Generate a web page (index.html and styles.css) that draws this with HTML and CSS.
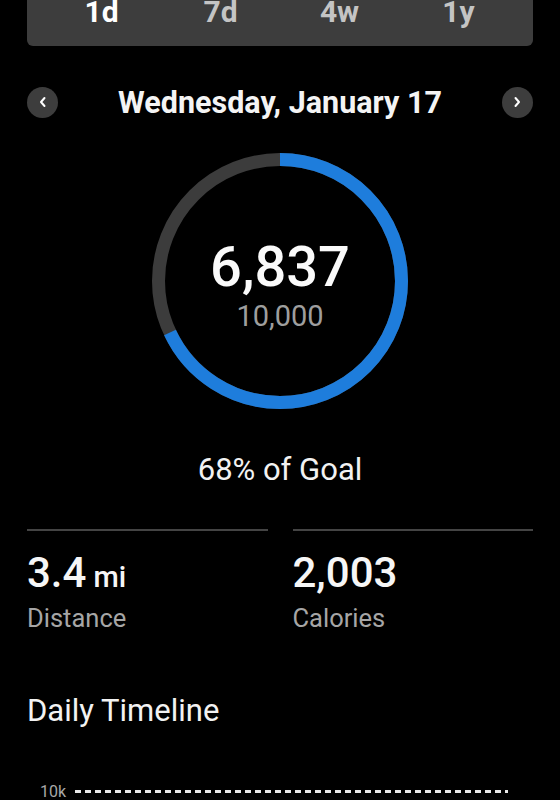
FILE: index.html
```html
<!DOCTYPE html>
<html lang="en">
<head>
<meta charset="UTF-8" />
<meta name="viewport" content="width=device-width, initial-scale=1" />
<title>Steps</title>
<link rel="stylesheet" href="styles.css">
</head>
<body>
<div class="page">
  <div class="tabs">
    <div class="tab active">1d</div>
    <div class="tab">7d</div>
    <div class="tab">4w</div>
    <div class="tab">1y</div>
  </div>

  <div class="date-row">
    <button class="nav-btn" aria-label="Previous day">
      <svg width="14" height="14" viewBox="0 0 14 14"><polyline points="8.5,3 5,7 8.5,11" /></svg>
    </button>
    <h2 class="date-title">Wednesday, January 17</h2>
    <button class="nav-btn" aria-label="Next day">
      <svg width="14" height="14" viewBox="0 0 14 14"><polyline points="5.5,3 9,7 5.5,11" /></svg>
    </button>
  </div>

  <div class="ring">
    <svg class="ring-svg" width="260" height="260" viewBox="0 0 260 260">
      <circle class="ring-track" cx="130" cy="130" r="121.5" />
      <!-- 68% of the circumference (2 * pi * 121.5 = 763.4) -->
      <circle class="ring-fill" cx="130" cy="130" r="121.5"
              stroke-dasharray="519.1 763.4" transform="rotate(-90 130 130)" />
    </svg>
    <div class="ring-text">
      <div class="steps">6,837</div>
      <div class="goal">10,000</div>
    </div>
  </div>

  <p class="goal-pct">68% of Goal</p>

  <div class="stats">
    <div class="stat">
      <div class="stat-value">3.4<span class="unit">mi</span></div>
      <div class="stat-label">Distance</div>
    </div>
    <div class="stat">
      <div class="stat-value">2,003</div>
      <div class="stat-label">Calories</div>
    </div>
  </div>

  <h3 class="section-title">Daily Timeline</h3>

  <div class="chart">
    <div class="chart-row">
      <span class="axis-label">10k</span>
      <span class="goal-line"></span>
    </div>
  </div>
</div>
</body>
</html>
```

FILE: styles.css
```css
body {
  margin: 0;
  background: #000;
  color: #f2f2f2;
  font-family: Roboto, "Noto Sans", Arial, sans-serif;
}
.page {
  padding: 0 27px;
}

/* --- Range tabs --- */
.tabs {
  display: grid;
  grid-template-columns: repeat(4, 1fr);
  margin-top: -24px;
  height: 70px;
  padding: 0 15px;
  box-sizing: border-box;
  background: #3d3d3d;
  border-radius: 6px;
}
.tab {
  text-align: center;
  font-size: 30px;
  font-weight: 700;
  line-height: 30px;
  padding-top: 21px;
  color: #c4c4c4;
}
.tab.active {
  color: #fff;
}

/* --- Date navigation --- */
.date-row {
  display: flex;
  align-items: center;
  justify-content: space-between;
  margin-top: 41px;
  height: 30px;
}
.nav-btn {
  width: 31px;
  height: 31px;
  border-radius: 50%;
  border: none;
  padding: 0;
  background: #3d3d3d;
  display: flex;
  align-items: center;
  justify-content: center;
}
.nav-btn polyline {
  fill: none;
  stroke: #fff;
  stroke-width: 2;
  stroke-linecap: round;
  stroke-linejoin: round;
}
.date-title {
  margin: 0;
  font-size: 30.5px;
  font-weight: 700;
  color: #f4f4f4;
}

/* --- Progress ring --- */
.ring {
  display: grid;
  justify-content: center;
  align-items: center;
  margin-top: 34px;
}
.ring-svg,
.ring-text {
  grid-area: 1 / 1;
}
.ring-svg circle {
  fill: none;
  stroke-width: 13;
}
.ring-track {
  stroke: #3c3c3c;
}
.ring-fill {
  stroke: #1e7ddc;
}
.ring-text {
  text-align: center;
  padding-top: 6px;
}
.steps {
  font-size: 56px;
  font-weight: 500;
  line-height: 60px;
  color: #fafafa;
}
.goal {
  font-size: 29px;
  line-height: 32px;
  margin-top: 3px;
  color: #9e9e9e;
}

.goal-pct {
  margin: 40px 0 0;
  text-align: center;
  font-size: 31px;
  color: #f2f2f2;
}

/* --- Stats --- */
.stats {
  display: grid;
  grid-template-columns: 1fr 1fr;
  gap: 25px;
  margin-top: 41px;
}
.stat {
  border-top: 2px solid #444;
  padding-top: 18px;
}
.stat-value {
  font-size: 42px;
  font-weight: 500;
  line-height: 48px;
  color: #f6f6f6;
}
.unit {
  font-size: 29px;
  line-height: 1;
  margin-left: 7px;
}
.stat-label {
  font-size: 25.5px;
  line-height: 30px;
  margin-top: 6px;
  color: #a6a6a6;
}

.section-title {
  margin: 59px 0 0;
  font-size: 31px;
  font-weight: 400;
  color: #f2f2f2;
}

/* --- Timeline chart --- */
.chart {
  margin-top: 53px;
  padding: 0 25px 0 13px;
}
.chart-row {
  display: flex;
  align-items: center;
  gap: 9px;
}
.axis-label {
  font-size: 16px;
  color: #a8a8a8;
}
.goal-line {
  flex: 1;
  height: 3px;
  background: repeating-linear-gradient(90deg, #e8e8e8 0 6px, transparent 6px 10px);
}
```
